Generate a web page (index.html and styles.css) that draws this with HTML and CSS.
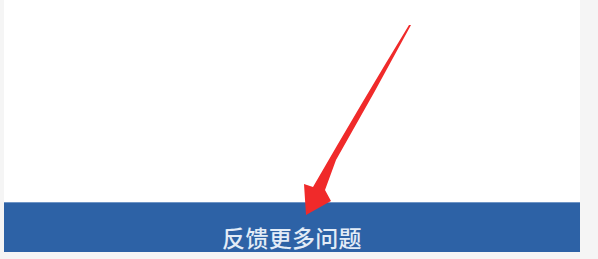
FILE: index.html
```html
<!DOCTYPE html>
<html lang="zh">
<head>
<meta charset="utf-8">
<link rel="stylesheet" href="styles.css">
</head>
<body>
<div class="page">
  <div class="panel"></div>
  <div class="bar"><span class="bar-text">反馈更多问题</span></div>
</div>
<svg class="arrow" width="598" height="259" viewBox="0 0 598 259">
  <path d="M409,25 L411,25 Q375,92 336,160 L325,190 L331,201 L306,215 L304,184 L313,187 Q362,102 409,25 Z" fill="#f02a2a"/>
</svg>
</body>
</html>
```
FILE: styles.css
```css
html, body {
  margin: 0;
  padding: 0;
  width: 598px;
  height: 259px;
  overflow: hidden;
  background: #f5f5f5;
}
.page {
  display: flex;
  flex-direction: column;
  width: 576px;
  margin-left: 4px;
}
.panel {
  height: 202px;
  background: #ffffff;
}
.bar {
  height: 50px;
  background: #2d62a6;
  display: flex;
  justify-content: center;
  align-items: flex-end;
  box-shadow: inset 0 1px 0 #6f95c6;
}
.bar-text {
  font-family: "Noto Sans CJK SC", "Noto Sans", sans-serif;
  font-size: 23px;
  font-weight: 500;
  line-height: 30px;
  color: #e3ecf7;
  letter-spacing: 0.3px;
}
.arrow {
  position: absolute;
  left: 0;
  top: 0;
}
```
